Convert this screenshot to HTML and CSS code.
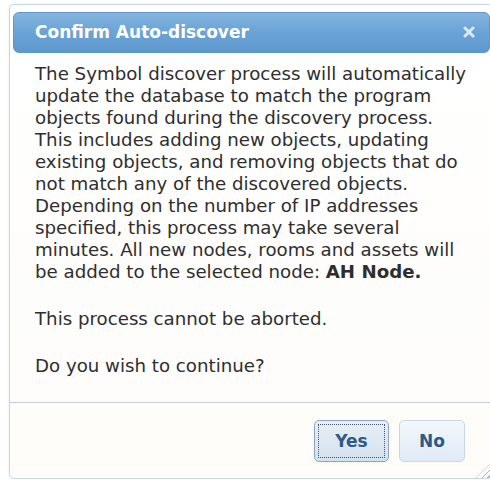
FILE: index.html
```html
<!DOCTYPE html>
<html lang="en">
<head>
<meta charset="utf-8">
<title>Confirm Auto-discover</title>
<link rel="stylesheet" href="styles.css">
</head>
<body>
<div class="dialog" role="dialog" aria-labelledby="dlg-title">
  <div class="titlebar">
    <span class="title" id="dlg-title">Confirm Auto-discover</span>
    <button class="close" type="button" aria-label="close">
      <svg width="12" height="12" viewBox="0 0 12 12" aria-hidden="true">
        <path d="M2 2 L10 10 M10 2 L2 10" stroke="currentColor" stroke-width="3" stroke-linecap="round"/>
      </svg>
    </button>
  </div>
  <div class="content">
    <p>The Symbol discover process will automatically<br>
    update the database to match the program<br>
    objects found during the discovery process.<br>
    This includes adding new objects, updating<br>
    existing objects, and removing objects that do<br>
    not match any of the discovered objects.<br>
    Depending on the number of IP addresses<br>
    specified, this process may take several<br>
    minutes. All new nodes, rooms and assets will<br>
    be added to the selected node: <b>AH Node.</b></p>
    <p>This process cannot be aborted.</p>
    <p>Do you wish to continue?</p>
  </div>
  <div class="buttonpane">
    <button class="btn btn-focus" type="button"><span>Yes</span></button>
    <button class="btn" type="button"><span>No</span></button>
  </div>
  <span class="grip" aria-hidden="true"></span>
</div>
</body>
</html>
```

FILE: styles.css
```css
html, body {
  margin: 0;
  padding: 0;
  background: #ffffff;
}

body {
  font-family: "DejaVu Sans", "Open Sans", sans-serif;
  color: #2e2e2e;
}

.dialog {
  position: relative;
  box-sizing: border-box;
  margin: 4px 0 0 9px;
  width: 484px;
  height: 475px;
  border: 1px solid #c9d6e2;
  border-radius: 5px;
  padding: 7px 2px 0 3px;
  background: linear-gradient(#ffffff, #fdfcf9);
  display: flex;
  flex-direction: column;
  box-shadow: 0 0 3px rgba(0, 0, 0, 0.08);
}

.titlebar {
  display: flex;
  align-items: center;
  justify-content: space-between;
  height: 42px;
  padding: 0 14px 0 21px;
  border: 1px solid #5e97cc;
  border-radius: 6px;
  background: linear-gradient(#84b5df, #6aa3d6 50%, #5e98ce);
  color: #ffffff;
}

.title {
  font-weight: bold;
  font-size: 17px;
}

.close {
  border: 0;
  background: none;
  padding: 0;
  color: #dce9f5;
  display: flex;
}

.content {
  flex: 1;
  padding: 10px 4px 0 22px;
  font-size: 18.2px;
  line-height: 22px;
  white-space: nowrap;
}

.content p {
  margin: 0 0 25px;
}

.buttonpane {
  display: flex;
  justify-content: flex-end;
  gap: 10px;
  height: 81px;
  box-sizing: border-box;
  padding: 17px 27px 0 0;
  border-top: 1px solid #c3ced8;
  margin: 0 -2px 0 -3px;
}

.btn {
  box-sizing: border-box;
  height: 42px;
  min-width: 66px;
  padding: 3px;
  border: 1px solid #c7d7e7;
  border-radius: 5px;
  background: linear-gradient(#f2f7fc, #dfeaf5);
  color: #2f5a85;
  font-family: inherit;
  font-weight: bold;
  font-size: 17px;
}

.btn span {
  display: flex;
  align-items: center;
  justify-content: center;
  height: 100%;
  padding: 0 10px;
}

.btn-focus {
  width: 75px;
  border-color: #8aa6c2;
  background: linear-gradient(#e8eff7, #d3e1ee);
}

.btn-focus span {
  outline: 1px dotted #44556a;
  outline-offset: -1px;
}

.grip {
  position: absolute;
  right: 0;
  bottom: 0;
  width: 16px;
  height: 16px;
  background: repeating-linear-gradient(135deg, transparent 0 3px, #9fb6cc 3px 4px);
  clip-path: polygon(100% 0, 100% 100%, 0 100%);
}
```
